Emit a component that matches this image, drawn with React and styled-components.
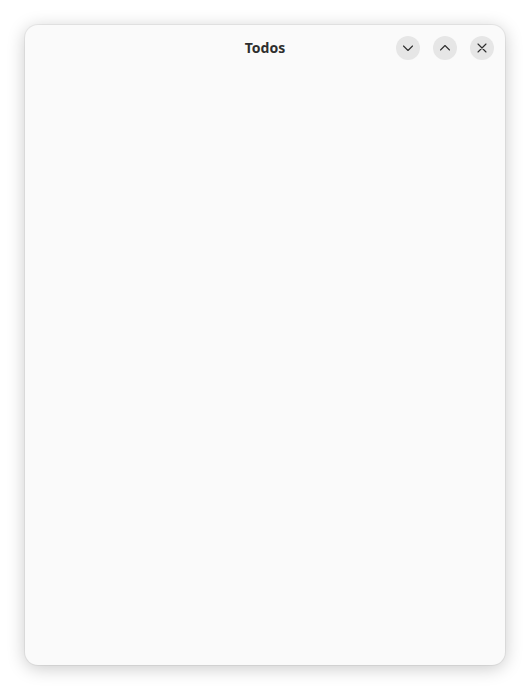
import React from 'react';
import styled, { createGlobalStyle } from 'styled-components';

const Global = createGlobalStyle`
	html, body {
		margin: 0;
		padding: 0;
		background: #ffffff;
	}
	#root {
		width: 530px;
		height: 690px;
	}
`;

const Desktop = styled.div`
	width: 530px;
	height: 690px;
	padding: 25px;
	box-sizing: border-box;
`;

const Window = styled.div`
	width: 480px;
	height: 640px;
	border-radius: 13px;
	background-color: #fafafa;
	box-shadow: 0 0 0 1px rgba(0, 0, 0, 0.05), 0 3px 18px rgba(0, 0, 0, 0.22);
	display: flex;
	flex-direction: column;
	overflow: hidden;
`;

const HeaderBar = styled.div`
	height: 46px;
	display: grid;
	grid-template-columns: 1fr auto 1fr;
	align-items: center;
	padding: 0 11px;
	font-family: 'Noto Sans', 'DejaVu Sans', sans-serif;
`;

const Title = styled.div`
	grid-column: 2;
	font-size: 14px;
	font-weight: 700;
	color: #2e2e2e;
	margin-bottom: 2px;
`;

const Controls = styled.div`
	grid-column: 3;
	justify-self: end;
	display: flex;
	gap: 13px;
`;

const RoundButton = styled.button`
	width: 24px;
	height: 24px;
	border-radius: 50%;
	border: none;
	padding: 0;
	background-color: #e6e6e6;
	color: #2e2e2e;
	display: flex;
	align-items: center;
	justify-content: center;
	cursor: pointer;
`;

const Content = styled.div`
	flex: 1;
`;

const Icon = ({ d }) => (
	<svg width='16' height='16' viewBox='0 0 16 16' fill='none'>
		<path d={d} stroke='currentColor' strokeWidth='1.1' strokeLinecap='round' strokeLinejoin='round' />
	</svg>
);

const App = () => {
	return (
		<>
			<Global />
			<Desktop>
				<Window>
					<HeaderBar>
						<Title>Todos</Title>
						<Controls>
							<RoundButton aria-label='Minimize'>
								<Icon d='M3.5 6 L8 10.5 L12.5 6' />
							</RoundButton>
							<RoundButton aria-label='Maximize'>
								<Icon d='M3.5 10 L8 5.5 L12.5 10' />
							</RoundButton>
							<RoundButton aria-label='Close'>
								<Icon d='M4 4 L12 12 M12 4 L4 12' />
							</RoundButton>
						</Controls>
					</HeaderBar>
					<Content />
				</Window>
			</Desktop>
		</>
	);
};

export default App;
